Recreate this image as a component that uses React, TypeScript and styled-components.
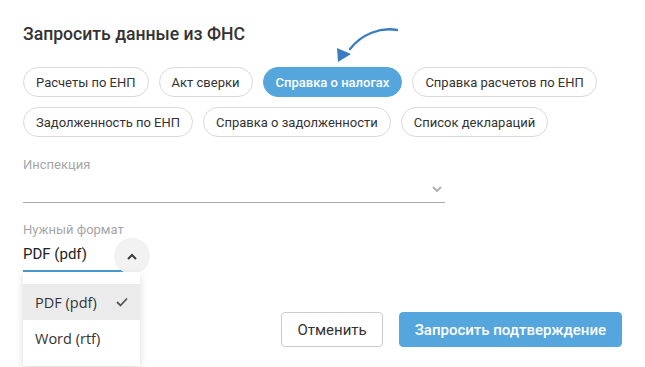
import React, { useState } from 'react';
import styled, { createGlobalStyle } from 'styled-components';

const GlobalStyle = createGlobalStyle`
  html, body {
    margin: 0;
    padding: 0;
    background: #ffffff;
  }
  body {
    font-family: Roboto, 'Liberation Sans', Arial, sans-serif;
    color: #333333;
  }
`;

const reportTypes = [
  'Расчеты по ЕНП',
  'Акт сверки',
  'Справка о налогах',
  'Справка расчетов по ЕНП',
  'Задолженность по ЕНП',
  'Справка о задолженности',
  'Список деклараций',
];

const formats = ['PDF (pdf)', 'Word (rtf)'];

export default function App() {
  const [active, setActive] = useState(2);
  const [format, setFormat] = useState(0);

  return (
    <>
      <GlobalStyle />
      <Page>
        <Title>Запросить данные из ФНС</Title>
        <ChipList>
          {reportTypes.map((t, i) => (
            <Chip key={t} $active={i === active} onClick={() => setActive(i)}>
              {t}
            </Chip>
          ))}
        </ChipList>
        <Hint width="80" height="48" viewBox="0 0 80 48">
          <path
            d="M75 9 C58 6 40 13 28 28"
            fill="none"
            stroke="#3b7cc0"
            strokeWidth="2.4"
            strokeLinecap="round"
          />
          <polygon points="15,27 29,33 16,41" fill="#3b7cc0" />
        </Hint>

        <Field $width={422}>
          <Label>Инспекция</Label>
          <SelectRow>
            <Value />
            <Chevron viewBox="0 0 10 6">
              <path d="M1 1 L5 5 L9 1" />
            </Chevron>
          </SelectRow>
        </Field>

        <FormatField>
          <Label>Нужный формат</Label>
          <FormatRow>
            <Value>{formats[format]}</Value>
            <ToggleButton>
              <svg width="10" height="7" viewBox="0 0 10 7">
                <path d="M1 6 L5 2 L9 6" fill="none" stroke="#3a3a3a" strokeWidth="2" />
              </svg>
            </ToggleButton>
          </FormatRow>
          <Menu>
            {formats.map((f, i) => (
              <MenuItem key={f} $selected={i === format} onClick={() => setFormat(i)}>
                <span>{f}</span>
                {i === format && (
                  <svg width="12" height="10" viewBox="0 0 12 10">
                    <path d="M1 5 L4.5 8.5 L11 1.5" fill="none" stroke="#555" strokeWidth="1.8" />
                  </svg>
                )}
              </MenuItem>
            ))}
          </Menu>
        </FormatField>

        <Actions>
          <Button>Отменить</Button>
          <Button $primary>Запросить подтверждение</Button>
        </Actions>
      </Page>
    </>
  );
}

const Page = styled.div`
  position: relative;
  width: 645px;
  height: 367px;
  box-sizing: border-box;
  padding: 24px 23px 0;
  overflow: hidden;
`;

const Title = styled.h2`
  margin: 0;
  font-size: 17.6px;
  line-height: 21px;
  font-weight: 500;
  color: #333333;
`;

const ChipList = styled.div`
  display: flex;
  flex-wrap: wrap;
  gap: 10px;
  max-width: 600px;
  margin-top: 22px;
`;

const Chip = styled.button<{ $active?: boolean }>`
  height: 30px;
  padding: 0 12px;
  border-radius: 15px;
  box-sizing: border-box;
  border: 1px solid ${(p) => (p.$active ? '#55a6dd' : '#d9d9d9')};
  background: ${(p) => (p.$active ? '#55a6dd' : '#ffffff')};
  color: ${(p) => (p.$active ? '#ffffff' : '#333333')};
  font-family: Roboto, 'Liberation Sans', Arial, sans-serif;
  font-size: 13px;
  font-weight: ${(p) => (p.$active ? 500 : 400)};
  cursor: pointer;
`;

const Hint = styled.svg`
  position: absolute;
  left: 322px;
  top: 21px;
`;

const Field = styled.div<{ $width: number }>`
  width: ${(p) => p.$width}px;
  margin-top: 20px;
`;

const Label = styled.div`
  font-size: 13px;
  line-height: 16px;
  color: #a6a6a6;
`;

const SelectRow = styled.div`
  display: flex;
  align-items: center;
  justify-content: space-between;
  height: 29px;
  border-bottom: 1px solid #a8a8a8;
`;

const Value = styled.div`
  font-size: 15px;
  line-height: 20px;
  color: #222222;
`;

const Chevron = styled.svg`
  width: 10px;
  height: 6px;
  margin-right: 3px;
  margin-top: 2px;
  fill: none;
  stroke: #b0b0b0;
  stroke-width: 2;
`;

const FormatField = styled.div`
  position: relative;
  width: 117px;
  margin-top: 19px;
`;

const FormatRow = styled.div`
  display: flex;
  align-items: center;
  justify-content: space-between;
  height: 32px;
  border-bottom: 2px solid #4a9bd6;
`;

const ToggleButton = styled.div`
  display: flex;
  align-items: center;
  justify-content: center;
  width: 36px;
  height: 36px;
  margin-right: -28px;
  margin-bottom: -4px;
  border-radius: 50%;
  background: #f2f2f2;
  position: relative;
  right: 18px;
`;

const Menu = styled.div`
  position: absolute;
  left: 0;
  top: 100%;
  width: 117px;
  padding: 12px 0 10px;
  background: #ffffff;
  box-shadow: 0 3px 8px rgba(0, 0, 0, 0.14);
  z-index: 2;
`;

const MenuItem = styled.div<{ $selected?: boolean }>`
  display: flex;
  align-items: center;
  justify-content: space-between;
  height: 36px;
  padding: 0 12px;
  font-family: 'Open Sans', Roboto, sans-serif;
  font-size: 14.5px;
  color: #333333;
  background: ${(p) => (p.$selected ? '#ebebeb' : 'transparent')};
  cursor: pointer;
`;

const Actions = styled.div`
  display: flex;
  justify-content: flex-end;
  gap: 16px;
  margin-top: 40px;
`;

const Button = styled.button<{ $primary?: boolean }>`
  height: 35px;
  padding: 0 15px;
  border-radius: 4px;
  box-sizing: border-box;
  border: 1px solid ${(p) => (p.$primary ? '#55a6dd' : '#cccccc')};
  background: ${(p) => (p.$primary ? '#55a6dd' : '#ffffff')};
  color: ${(p) => (p.$primary ? '#ffffff' : '#333333')};
  font-family: Roboto, 'Liberation Sans', Arial, sans-serif;
  font-size: 15px;
  font-weight: ${(p) => (p.$primary ? 500 : 400)};
  cursor: pointer;
`;
